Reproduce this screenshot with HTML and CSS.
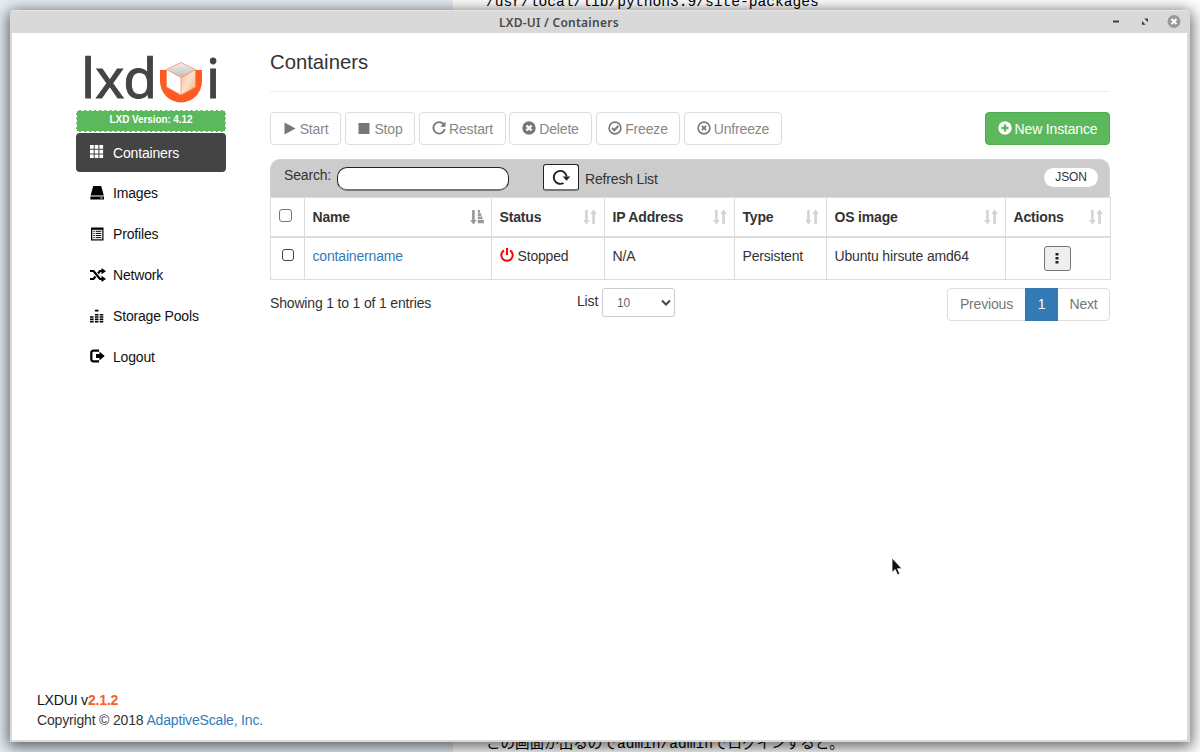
FILE: index.html
```html
<!DOCTYPE html>
<html lang="en">
<head>
    <meta charset="UTF-8">
    <meta name="viewport" content="width=device-width, initial-scale=1.0">
    <title>LXD-UI / Containers</title>
    <link rel="stylesheet" href="styles.css">
</head>
<body>
    <svg class="sprite" width="0" height="0">
        <symbol id="sort" viewBox="0 0 14 16">
            <path d="M2.100 1h2.600v10h2l-3.300 4.400L.1 11h2zM9.300 15h2.600V5h2l-3.300-4.400L7.300 5h2z"/>
        </symbol>
        <symbol id="sort-asc" viewBox="0 0 14 16">
            <path d="M2.100 1h2.600v10h2l-3.300 4.400L.1 11h2zM7.800 1h2.200v2.700H7.800zM7.800 4.300h3.400v2.700H7.800zM7.800 7.600h4.600v2.700H7.800zM7.800 10.900h6.200v3.300H7.800z"/>
        </symbol>
    </svg>

    <div class="backdrop">
        <div class="doc">
            <p class="doc-top">/usr/local/lib/python3.9/site-packages</p>
            <p class="doc-bottom">この画面が出るのでadmin/adminでログインすると。</p>
        </div>
    </div>

    <div class="window">
        <div class="titlebar">
            <span class="title">LXD-UI / Containers</span>
            <div class="controls">
                <svg width="14" height="14" viewBox="0 0 14 14"><path d="M4 5.500h6v2H4z" fill="#3c3c3c"/></svg>
                <svg width="14" height="14" viewBox="0 0 14 14"><path d="M6.300 3.500H10v3.700zM4 6v3.700h3.700z" fill="#3c3c3c"/></svg>
                <svg width="14" height="14" viewBox="0 0 14 14"><circle cx="7" cy="6.500" r="6.500" fill="#999"/><path d="M4.500 4l5 5M9.500 4l-5 5" stroke="#fff" stroke-width="2"/></svg>
            </div>
        </div>

        <div class="page">
            <aside class="sidebar">
                <svg class="logo" width="150" height="54" viewBox="0 0 150 54">
                    <defs>
                        <linearGradient id="top" x1="0" y1="0" x2="0" y2="1"><stop offset="0" stop-color="#f2f2f2"/><stop offset="1" stop-color="#bdbdbd"/></linearGradient>
                        <linearGradient id="side" x1="0" y1="0" x2="1" y2="1"><stop offset="0" stop-color="#e9b988"/><stop offset=".5" stop-color="#fae3c8"/><stop offset="1" stop-color="#e6ae76"/></linearGradient>
                    </defs>
                    <text class="logo-text" x="5" y="42.500" textLength="76" lengthAdjust="spacingAndGlyphs">lxd</text>
                    <text class="logo-text" x="130" y="42.500">i</text>
                    <path d="M84 15h42v11a21 21.500 0 0 1-42 0z" fill="#ff5a21"/>
                    <path d="M90.500 14L105 22v18L90.500 32z" fill="#fff"/>
                    <path d="M119.500 14L105 22v18l14.500-8z" fill="url(#side)"/>
                    <path d="M105 7.500l14.500 7L105 22.500l-14.500-8z" fill="url(#top)" stroke="#ff8a60" stroke-width=".8"/>
                    <path d="M105 22.500V40M90.500 14.500V32L105 40l14.500-8V14.500" fill="none" stroke="#ff8a60" stroke-width=".8"/>
                </svg>
                <div class="version">LXD Version: 4.12</div>
                <nav class="menu">
                    <a class="active"><svg viewBox="0 0 14 14"><path d="M0 0h3.700v3.700H0zM4.700 0h3.700v3.700H4.700zM9.400 0h3.700v3.700H9.400zM0 4.700h3.700v3.700H0zM4.700 4.700h3.700v3.700H4.700zM9.400 4.700h3.700v3.700H9.400zM0 9.400h3.700v3.700H0zM4.700 9.400h3.700v3.700H4.700zM9.400 9.400h3.700v3.700H9.400z"/></svg>Containers</a>
                    <a><svg viewBox="0 0 14 14"><path d="M3.200 0h8l2.600 9.500H.6zM.4 10.400H14V13.600H.4z"/><path d="M10.500 12h2" stroke="#fff"/></svg>Images</a>
                    <a><svg viewBox="0 0 14 14"><path d="M1 .5h12.500v13H1z"/><path d="M2.300 2.800h10v9.500h-10z" fill="#fff"/><path d="M3.300 4.300h1.400M3.300 6.400h1.400M3.300 8.500h1.400M3.300 10.600h1.400M5.700 4.300h5.600M5.700 6.400h5.600M5.700 8.500h5.600M5.700 10.600h5.600" stroke="#000" stroke-width="1"/></svg>Profiles</a>
                    <a><svg viewBox="0 0 14 14"><path d="M0 3h3.500l6.500 8h2M0 11h3.500l2-2.500M8 5.500l2-2.500h2" fill="none" stroke="#000" stroke-width="2.200"/><path d="M11.500 0L16 3.300l-4.500 3zM11.500 7.800L16 11l-4.500 3z"/></svg>Network</a>
                    <a><svg viewBox="0 0 14 14"><path d="M0 7.300h3.600v1.500H0zM0 9.500h3.600v1.700H0zM0 11.900h3.600v1.500H0zM4.900.8h3.600v1.700H4.900zM4.900 4.900h3.600v1.600H4.900zM4.900 7.300h3.600v1.500H4.900zM4.900 9.500h3.600v1.700H4.900zM4.900 11.900h3.600v1.500H4.900zM9.700 4.900h3.600v1.600H9.700zM9.700 7.300h3.600v1.500H9.700zM9.700 9.500h3.600v1.700H9.700zM9.700 11.900h3.600v1.500H9.700z"/></svg>Storage Pools</a>
                    <a><svg viewBox="0 0 14 14"><path d="M9 1.700H3.500Q1.300 1.700 1.300 4v6q0 2.300 2.200 2.300H9" fill="none" stroke="#000" stroke-width="2.200"/><path d="M6 5h3.500V2.500L14.700 7l-5.200 4.500V9H6z"/></svg>Logout</a>
                </nav>
            </aside>

            <main class="main">
                <h1>Containers</h1>
                <div class="toolbar">
                    <button class="btn start"><svg viewBox="0 0 14 14"><path d="M1.500 1.500l11 6-11 6z"/></svg>Start</button>
                    <button class="btn stop"><svg viewBox="0 0 14 14"><path d="M1.500 2h11v11h-11z"/></svg>Stop</button>
                    <button class="btn restart"><svg viewBox="0 0 14 14"><path d="M11.500 3.200A5.700 5.700 0 1 0 12.700 8" fill="none" stroke="#777" stroke-width="1.800"/><path d="M13.500.5v5.200H8.300z"/></svg>Restart</button>
                    <button class="btn delete"><svg viewBox="0 0 14 14"><circle cx="7" cy="7" r="6.700"/><path d="M4.500 4.500l5 5M9.500 4.500l-5 5" stroke="#fff" stroke-width="2.400"/></svg>Delete</button>
                    <button class="btn freeze"><svg viewBox="0 0 14 14"><circle cx="7" cy="7" r="5.900" fill="none" stroke="#777" stroke-width="1.600"/><path d="M4 7l2.300 2.300L10.300 5" fill="none" stroke="#777" stroke-width="2"/></svg>Freeze</button>
                    <button class="btn unfreeze"><svg viewBox="0 0 14 14"><circle cx="7" cy="7" r="5.900" fill="none" stroke="#777" stroke-width="1.600"/><path d="M4.800 4.800l4.400 4.400M9.200 4.800L4.800 9.200" stroke="#777" stroke-width="1.700"/></svg>Unfreeze</button>
                    <button class="btn btn-new"><svg viewBox="0 0 14 14"><circle cx="7" cy="7" r="6.700"/><path d="M7 3.500v7M3.500 7h7" stroke="#5cb85c" stroke-width="2.300"/></svg>New Instance</button>
                </div>

                <div class="filter">
                    <label for="search">Search:</label>
                    <input type="text" id="search">
                    <button class="refresh"><svg width="20" height="18" viewBox="0 0 20 18"><path d="M12.500 15A6.500 6.500 0 1 1 15.700 8.500" fill="none" stroke="#222" stroke-width="1.900"/><path d="M11.700 8.500h7.600l-3.800 4.200z" fill="#222"/></svg></button>
                    <span class="refresh-label">Refresh List</span>
                    <a class="json">JSON</a>
                </div>

                <table class="list">
                    <colgroup>
                        <col class="c-check"><col class="c-name"><col class="c-status"><col class="c-ip"><col class="c-type"><col class="c-os"><col class="c-actions">
                    </colgroup>
                    <thead>
                        <tr>
                            <th><span class="check"></span></th>
                            <th><div>Name<svg class="sorted"><use href="#sort-asc"/></svg></div></th>
                            <th><div>Status<svg><use href="#sort"/></svg></div></th>
                            <th><div>IP Address<svg><use href="#sort"/></svg></div></th>
                            <th><div>Type<svg><use href="#sort"/></svg></div></th>
                            <th><div>OS image<svg><use href="#sort"/></svg></div></th>
                            <th><div>Actions<svg><use href="#sort"/></svg></div></th>
                        </tr>
                    </thead>
                    <tbody>
                        <tr>
                            <td><span class="check row-check"></span></td>
                            <td><a class="link">containername</a></td>
                            <td><div class="status"><svg viewBox="0 0 14 14"><path d="M4 2.300a5.700 5.700 0 1 0 6 0M7 0v7" fill="none" stroke="#f00" stroke-width="2"/></svg>Stopped</div></td>
                            <td>N/A</td>
                            <td>Persistent</td>
                            <td>Ubuntu hirsute amd64</td>
                            <td class="actions"><button class="more"><svg width="4" height="12" viewBox="0 0 4 12"><path d="M.5 1h3v2.500h-3zM.5 5h3v2.500h-3zM.5 9h3v2.500h-3z" fill="#222"/></svg></button></td>
                        </tr>
                    </tbody>
                </table>

                <div class="list-footer">
                    <span class="info">Showing 1 to 1 of 1 entries</span>
                    <span class="length">List</span>
                    <span class="select">10<svg width="10" height="8" viewBox="0 0 10 8"><path d="M1 1.500l4 4 4-4" fill="none" stroke="#444" stroke-width="2"/></svg></span>
                    <div class="pagination">
                        <a class="prev">Previous</a><a class="current">1</a><a class="next">Next</a>
                    </div>
                </div>
            </main>
        </div>

        <footer class="footer">
            <div class="app">LXDUI v<b>2.1.2</b></div>
            <div>Copyright © 2018 <a class="link">AdaptiveScale, Inc.</a></div>
        </footer>
    </div>

    <svg class="cursor" width="12" height="19" viewBox="0 0 12 19"><path d="M1 1v14.500l3.200-3 2.300 5.300 2.300-1-2.300-5.100H11z" fill="#111" stroke="#fff" stroke-width=".8"/></svg>
</body>
</html>
```

FILE: styles.css
```css
* {
    box-sizing: border-box;
}

body {
    margin: 0;
    height: 752px;
    overflow: hidden;
    font-family: "Liberation Sans", Arial, sans-serif;
    font-size: 14px;
    letter-spacing: -0.17px;
    color: #333;
}

p {
    margin: 0;
}

.sprite {
    position: absolute;
}

/* desktop behind the window */
.backdrop {
    height: 752px;
    padding-left: 453px;
    background: #e6eef5;
}

.doc {
    height: 752px;
    padding-left: 33px;
    background: #fff;
    display: flex;
    flex-direction: column;
    justify-content: space-between;
    overflow: hidden;
    color: #000;
    font-family: "Liberation Mono", "Noto Sans CJK JP", monospace;
    font-size: 14.6px;
    letter-spacing: 0;
    white-space: nowrap;
}

.doc-top {
    line-height: 20px;
    margin-top: -8px;
}

.doc-bottom {
    line-height: 20px;
    margin-bottom: -2px;
    font-size: 14.56px;
}

.window {
    position: absolute;
    left: 10px;
    top: 10px;
    width: 1180px;
    height: 732px;
    display: flex;
    flex-direction: column;
    background: #fff;
    border: 2px solid #d9d9d9;
    border-top: 0;
    border-right-width: 3px;
    border-radius: 3px 3px 0 0;
    box-shadow: 0 3px 15px 2px rgba(0, 0, 0, 0.62);
}

.titlebar {
    height: 23px;
    flex: none;
    display: flex;
    align-items: center;
    background: #d9d9d9;
    border-top: 1px solid #e6e6e6;
}

.title {
    margin-left: 487px;
    font-family: "Noto Sans", sans-serif;
    font-weight: 600;
    font-size: 12px;
    letter-spacing: 0.25px;
    color: #4a4a4a;
    white-space: nowrap;
}

.controls {
    display: flex;
    gap: 15px;
    margin-left: auto;
    margin-right: 6px;
}

.page {
    display: flex;
    flex: 1;
    padding-left: 64px;
}

.sidebar {
    width: 150px;
    margin-right: 44px;
    padding-top: 22px;
}

.logo {
    display: block;
    overflow: visible;
}

.logo-text {
    font-family: "Noto Sans", sans-serif;
    font-size: 55px;
    letter-spacing: 0;
    fill: #444;
    stroke: #444;
    stroke-width: 0.9px;
}

.version {
    height: 22px;
    margin-top: 1px;
    border: 1px dashed #fff;
    background: #5cb85c;
    color: #fff;
    font-size: 10px;
    font-weight: bold;
    letter-spacing: -0.1px;
    line-height: 18px;
    text-align: center;
}

.menu {
    display: flex;
    flex-direction: column;
    gap: 1.9px;
    padding-top: 1px;
}

.menu a {
    display: flex;
    align-items: center;
    height: 39px;
    padding-left: 13.5px;
    border-radius: 4px;
    color: #111;
}

.menu a.active {
    background: #444;
    color: #fff;
    fill: #fff;
}

.menu svg {
    width: 14px;
    height: 14px;
    margin: -1px 9.5px 0 0;
    overflow: visible;
}

.main {
    width: 840px;
}

h1 {
    height: 59px;
    margin: 0;
    padding-top: 17px;
    border-bottom: 1px solid #eee;
    font-size: 20.3px;
    font-weight: normal;
    letter-spacing: 0;
    line-height: 24px;
}

.toolbar {
    display: flex;
    gap: 4px;
    padding-top: 20px;
}

.btn {
    display: flex;
    align-items: center;
    justify-content: center;
    height: 33px;
    padding: 0;
    border: 1px solid #ddd;
    border-radius: 4px;
    background: #fff;
    color: #888;
    fill: #777;
    font: inherit;
    letter-spacing: inherit;
}

.btn svg {
    width: 14px;
    height: 14px;
    margin: -2px 3px 0 0;
}

.start { width: 71px; }
.stop { width: 70px; }
.restart { width: 87px; }
.delete { width: 83px; margin-left: -1px; }
.freeze { width: 84px; }
.unfreeze { width: 98px; }

.btn-new {
    width: 125px;
    margin-left: auto;
    border-color: #4cae4c;
    background: #5cb85c;
    color: #fff;
    fill: #fff;
}

.filter {
    display: flex;
    height: 38px;
    margin-top: 14px;
    padding: 0 11px 0 13px;
    border: 1px solid #d3d3d3;
    border-width: 1px 1px 0;
    border-radius: 10px 10px 0 0;
    background: #ccc;
}

.filter label {
    width: 47px;
    padding-top: 7px;
}

.filter input {
    width: 172px;
    height: 24px;
    margin: 7px 34px 0 6px;
    border: 1px solid #222;
    border-bottom: 2px solid #767676;
    border-radius: 10px;
    background: #fff;
}

.refresh {
    display: flex;
    align-items: center;
    justify-content: center;
    width: 36px;
    height: 27px;
    margin: 4px 6px 0 0;
    padding: 0;
    border: 1px solid #222;
    border-bottom: 2px solid #767676;
    border-radius: 3px;
    background: #fff;
}

.refresh-label {
    padding-top: 11px;
}

.json {
    width: 54px;
    height: 19px;
    margin: 8px 0 0 auto;
    border-radius: 10px;
    background: #fff;
    font-size: 12px;
    line-height: 19px;
    text-align: center;
}

.list {
    width: 841px;
    table-layout: fixed;
    border-collapse: collapse;
}

.c-check { width: 34px; }
.c-name { width: 187px; }
.c-status { width: 113px; }
.c-ip { width: 130px; }
.c-type { width: 92px; }
.c-os { width: 179px; }
.c-actions { width: 105px; }

.list th,
.list td {
    padding: 0 0 0 7.5px;
    border: 1px solid #ddd;
    text-align: left;
}

.list th {
    height: 39px;
    border-bottom-width: 2px;
}

.list th div {
    display: flex;
    align-items: center;
    justify-content: space-between;
    padding-right: 7px;
}

.list th svg {
    width: 14px;
    height: 16px;
    fill: #d3d3d3;
}

.list th svg.sorted {
    fill: #999;
}

.list td {
    height: 43px;
    padding-top: 10px;
    vertical-align: top;
}

.check {
    display: block;
    width: 13px;
    height: 13px;
    margin-top: -2px;
    border: 1px solid #767676;
    border-radius: 3px;
}

.row-check {
    width: 12px;
    height: 12px;
    margin: 1px 0 0 3px;
    border: 1.5px solid #444;
}

.link {
    color: #337ab7;
}

.status {
    display: flex;
}

.status svg {
    width: 14px;
    height: 14px;
    margin-right: 4px;
}

.list td.actions {
    padding: 8px 2px 0 0;
}

.more {
    display: flex;
    align-items: center;
    justify-content: center;
    width: 27px;
    height: 25px;
    margin: 0 auto;
    padding: 0;
    border: 1px solid #767676;
    border-radius: 3px;
    background: #efefef;
}

.list-footer {
    display: flex;
    padding-top: 8px;
}

.info {
    width: 307px;
    padding-top: 7px;
}

.length {
    width: 25px;
    padding-top: 5px;
}

.select {
    display: flex;
    align-items: center;
    justify-content: space-between;
    width: 73px;
    height: 29px;
    padding: 0 3px 0 14px;
    border: 1px solid #ccc;
    border-radius: 3px;
    color: #666;
    font-size: 12px;
}

.pagination {
    display: flex;
    width: 163px;
    height: 33px;
    margin-left: auto;
    border: 1px solid #ddd;
    border-radius: 4px;
    color: #777;
    line-height: 31px;
    text-align: center;
}

.prev {
    width: 77px;
}

.current {
    width: 33px;
    height: 33px;
    margin-top: -1px;
    background: #337ab7;
    color: #fff;
    line-height: 33px;
}

.next {
    flex: 1;
}

.footer {
    padding: 0 0 10px 25px;
    line-height: 19.5px;
}

.app {
    color: #111;
}

.app b {
    color: #ff5a21;
}

.cursor {
    position: absolute;
    left: 891px;
    top: 557px;
}
```
